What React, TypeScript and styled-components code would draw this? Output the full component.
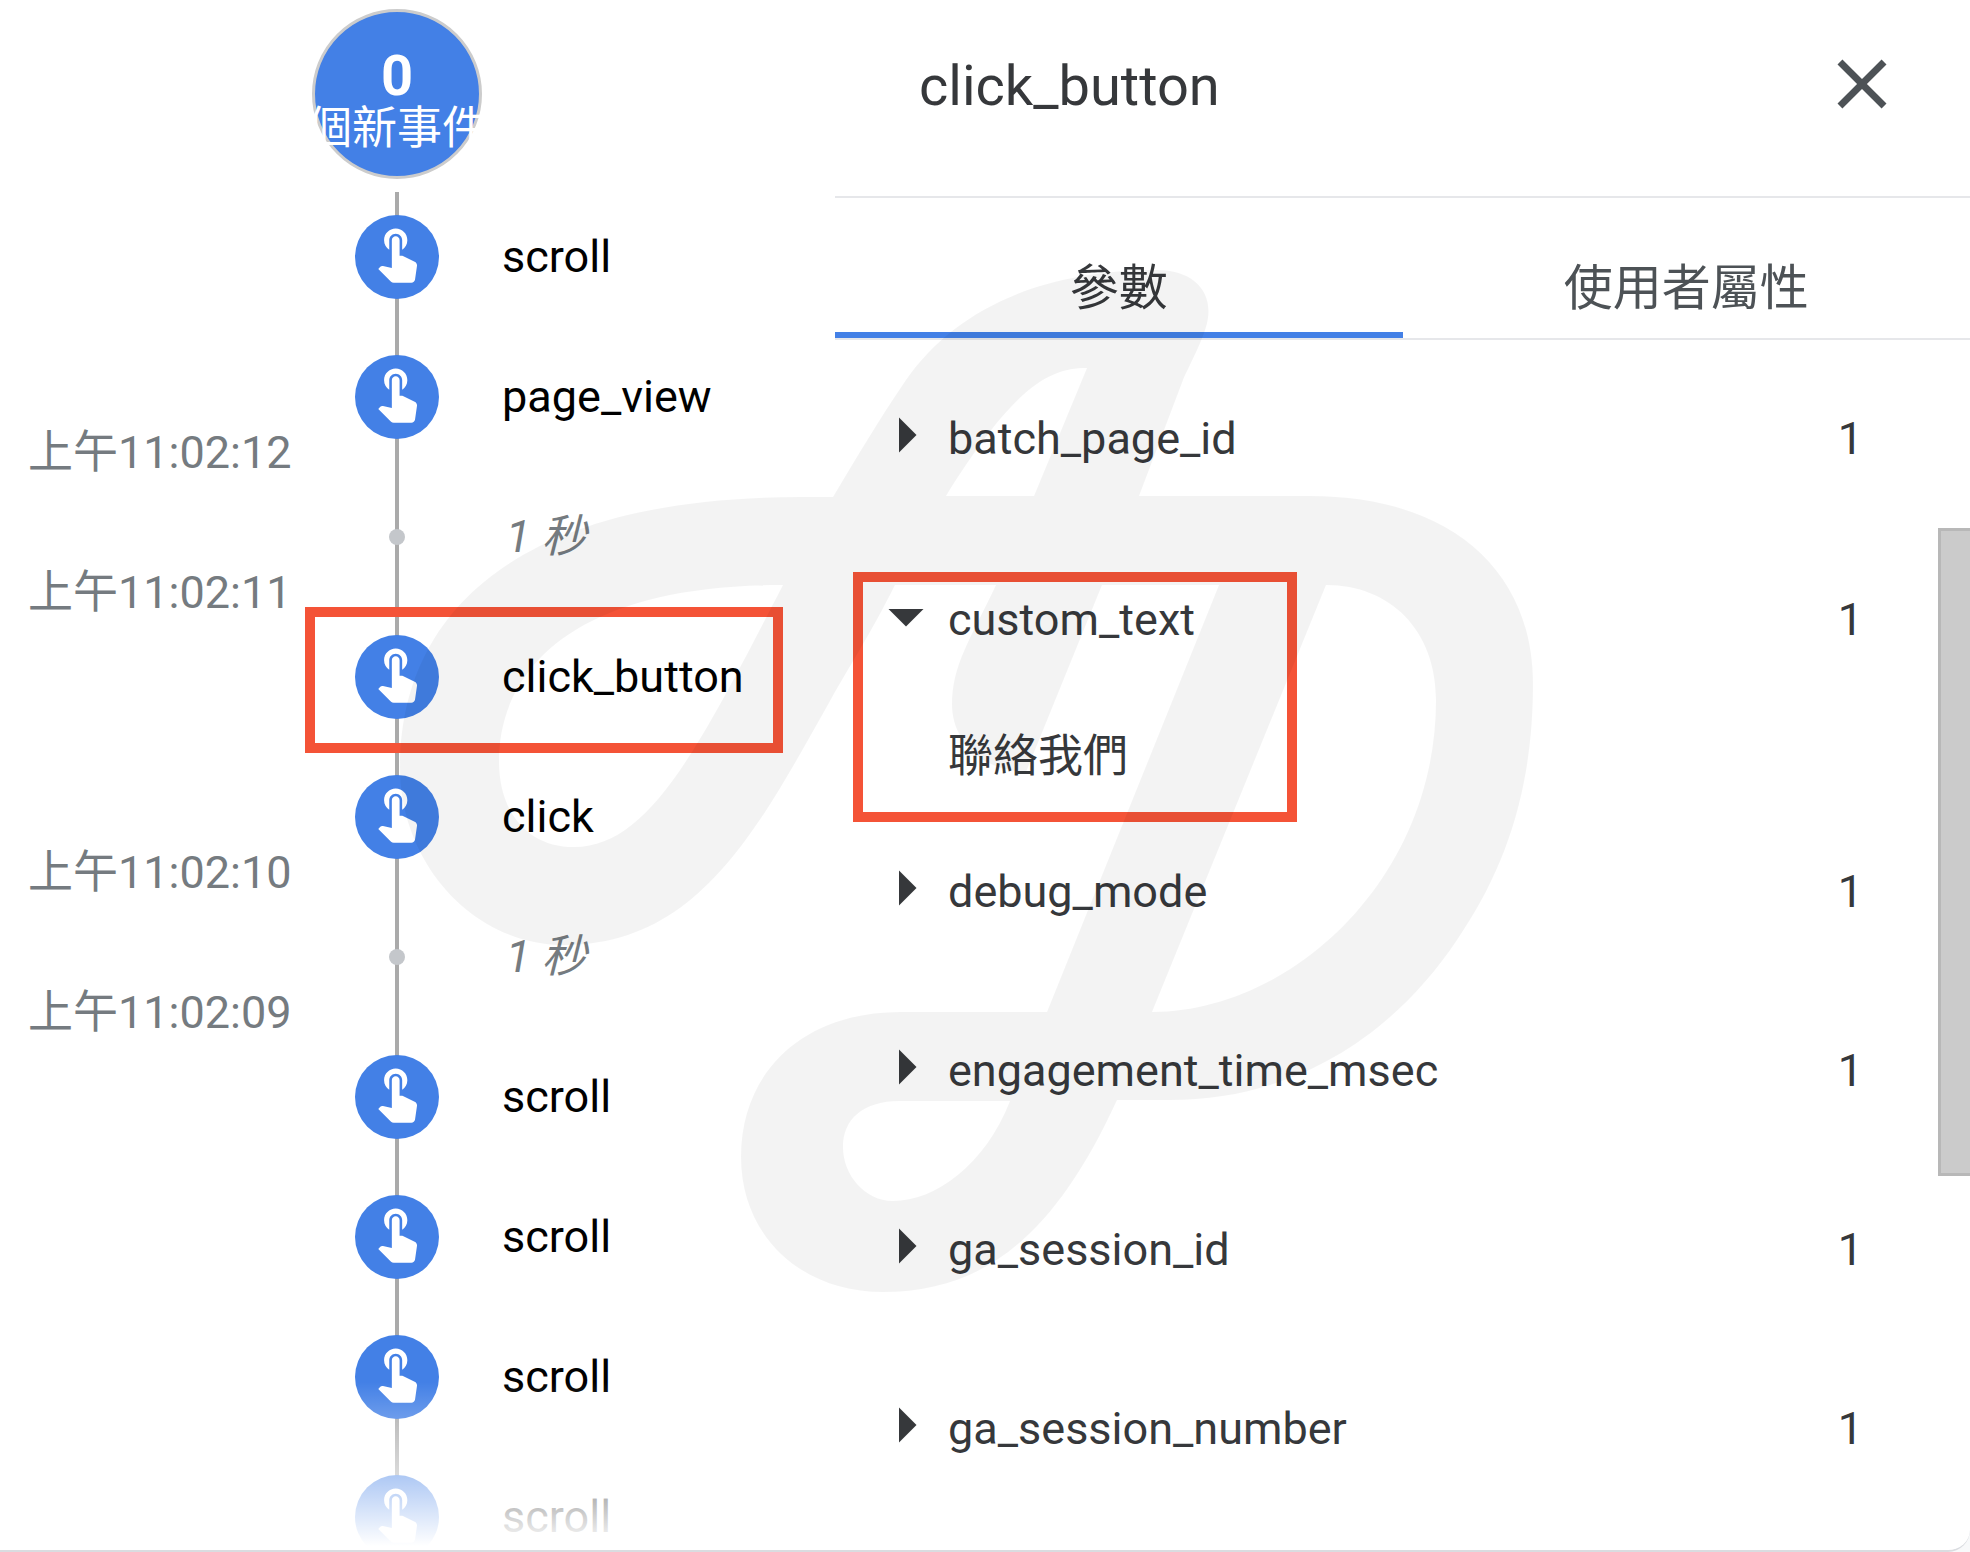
import React, { useState } from "react";
import styled, { createGlobalStyle, css } from "styled-components";

const GlobalStyle = createGlobalStyle`
  *, *::before, *::after { box-sizing: border-box; }
  body {
    margin: 0;
    background: #f8f9fa;
    color: #000;
    font-family: Roboto, "Noto Sans CJK TC", sans-serif;
    font-size: 45px;
    line-height: 56px;
  }
  button {
    margin: 0;
    padding: 0;
    border: 0;
    background: none;
    color: inherit;
    font: inherit;
    cursor: pointer;
  }
  ul, ol { margin: 0; padding: 0; list-style: none; }
`;

const Frame = styled.main`
  position: relative;
  display: grid;
  grid-template-columns: 835fr 1135fr;
  height: 100vh;
  overflow: hidden;
  background: #fff;
  border-bottom: 2px solid #dadce0;
  border-bottom-right-radius: 22px;
`;

const Timeline = styled.section`
  position: relative;
  overflow: hidden;
`;

const Fade = styled.div`
  position: absolute;
  inset: auto 0 0 0;
  height: 168px;
  background: linear-gradient(rgba(255, 255, 255, 0), #fff 164px);
  pointer-events: none;
`;

const Counter = styled.div`
  display: flex;
  flex-direction: column;
  align-items: center;
  width: 170px;
  height: 170px;
  margin: 9px 0 8px 312px;
  padding-top: 36px;
  border: 3px solid #ccc;
  border-radius: 50%;
  background: #4380e6;
  color: #fff;
  white-space: nowrap;
`;

const CounterValue = styled.strong`
  font-size: 56px;
  font-weight: 700;
  line-height: 56px;
`;

const CounterLabel = styled.span`
  line-height: 50px;
`;

const EventList = styled.ol`
  background: linear-gradient(#aaa, #aaa) 395px 5px / 4px 100% no-repeat;
`;

const EventRow = styled.li`
  position: relative;
  display: grid;
  grid-template-columns: 312px 170px 1fr;
  align-items: center;
  height: 140px;
`;

const Time = styled.time`
  align-self: end;
  padding-left: 28px;
  color: #757b80;
  line-height: 28px;
  white-space: nowrap;
`;

const Marker = styled.button`
  grid-column: 2;
  justify-self: center;
  display: grid;
  place-items: center;
  width: 84px;
  height: 84px;
  border-radius: 50%;
  background: #4380e6;
  color: #fff;
`;

const Dot = styled.span`
  grid-column: 2;
  justify-self: center;
  width: 16px;
  height: 16px;
  border-radius: 50%;
  background: #c4c7cb;
`;

const EventName = styled.span`
  padding-left: 20px;
  white-space: nowrap;
`;

const Gap = styled.em`
  padding-left: 24px;
  color: #757b80;
  white-space: nowrap;
`;

const outline = css`
  position: absolute;
  border: 10px solid #f45337;
  pointer-events: none;
`;

const EventOutline = styled.div`
  ${outline}
  left: 305px;
  top: 0;
  width: 478px;
  height: 146px;
`;

const ParamOutline = styled.div`
  ${outline}
  left: 18px;
  top: 42px;
  width: 444px;
  height: 250px;
`;

const Panel = styled.section`
  position: relative;
  color: #36383b;
`;

const PanelHeader = styled.header`
  display: flex;
  align-items: center;
  justify-content: space-between;
  padding: 42px 66px 70px 84px;
  border-bottom: 2px solid #e6e7ea;
`;

const Title = styled.h1`
  margin: 0;
  padding-top: 4px;
  font-size: 56px;
  font-weight: 400;
  line-height: 72px;
`;

const CloseButton = styled.button`
  display: grid;
  width: 84px;
  height: 84px;
  color: #4d5256;
`;

const Tabs = styled.div`
  display: grid;
  grid-template-columns: 1fr 1fr;
  border-bottom: 2px solid #e6e7ea;
`;

const Tab = styled.button<{ $active: boolean }>`
  height: 140px;
  padding-top: 48px;
  border-bottom: 6px solid ${(p) => (p.$active ? "#4380e6" : "transparent")};
  color: ${(p) => (p.$active ? "#36383b" : "#4d5256")};
  font-size: 49px;
`;

const ParamList = styled.ul`
  padding-top: 9px;
`;

const ParamItem = styled.li<{ $open: boolean }>`
  position: relative;
  margin-top: ${(p) => (p.$open ? 2 : 0)}px;
`;

const ParamRow = styled.div`
  display: grid;
  grid-template-columns: 84px 1fr auto;
  align-items: center;
  height: 179px;
  padding: 0 107px 0 29px;
`;

const Toggle = styled.button`
  display: grid;
  padding-bottom: 8px;
`;

const ParamValue = styled.div`
  padding: 20px 0 17px 113px;
`;

const ScrollThumb = styled.div`
  position: absolute;
  top: 528px;
  right: 0;
  width: 32px;
  height: 648px;
  border: 3px solid #b8b8b8;
  border-right: 0;
  background: #cbcbcb;
`;

const Watermark = styled.svg`
  position: absolute;
  left: 330px;
  top: 230px;
  width: 1230px;
  height: 1100px;
  pointer-events: none;
`;

const TapIcon = () => (
  <svg width="62" height="62" viewBox="0 2 24 24" fill="currentColor" aria-hidden="true">
    <path d="M9 11.24V7.5C9 6.12 10.12 5 11.5 5S14 6.12 14 7.5v3.74c1.21-.81 2-2.18 2-3.74C16 5.01 13.99 3 11.5 3S7 5.01 7 7.5c0 1.56.79 2.93 2 3.74zm9.84 4.63l-4.54-2.26c-.17-.07-.35-.11-.54-.11H13v-6c0-.83-.67-1.5-1.5-1.5S10 6.67 10 7.5v10.74l-3.43-.72c-.08-.01-.15-.03-.24-.03-.31 0-.59.13-.79.33l-.79.8 4.94 4.94c.27.27.65.44 1.06.44h6.79c.75 0 1.33-.55 1.44-1.28l.75-5.27c.01-.07.02-.14.02-.2 0-.62-.38-1.16-.91-1.38z" />
  </svg>
);

const ArrowIcon = ({ open }: { open: boolean }) => (
  <svg width="84" height="84" viewBox="0 0 24 24" fill="currentColor" aria-hidden="true">
    <path d={open ? "M7 10l5 5 5-5z" : "M10 17l5-5-5-5v10z"} />
  </svg>
);

type Entry = { name?: string; gap?: string; time?: string; outlined?: boolean };

const entries: Entry[] = [
  { name: "scroll" },
  { name: "page_view", time: "上午11:02:12" },
  { gap: "1 秒", time: "上午11:02:11" },
  { name: "click_button", outlined: true },
  { name: "click", time: "上午11:02:10" },
  { gap: "1 秒", time: "上午11:02:09" },
  { name: "scroll" },
  { name: "scroll" },
  { name: "scroll" },
  { name: "scroll" },
];

const params = [
  { name: "batch_page_id", count: 1 },
  { name: "custom_text", count: 1, value: "聯絡我們" },
  { name: "debug_mode", count: 1 },
  { name: "engagement_time_msec", count: 1 },
  { name: "ga_session_id", count: 1 },
  { name: "ga_session_number", count: 1 },
];

const tabs = ["參數", "使用者屬性"];

export default function App() {
  const [tab, setTab] = useState(0);

  return (
    <>
      <GlobalStyle />
      <Frame>
        <Timeline>
          <Counter>
            <CounterValue>0</CounterValue>
            <CounterLabel>個新事件</CounterLabel>
          </Counter>
          <EventList>
            {entries.map((entry, i) => (
              <EventRow key={i}>
                {entry.time && <Time>{entry.time}</Time>}
                {entry.name ? (
                  <>
                    <Marker aria-label={entry.name}>
                      <TapIcon />
                    </Marker>
                    <EventName>{entry.name}</EventName>
                  </>
                ) : (
                  <>
                    <Dot />
                    <Gap>{entry.gap}</Gap>
                  </>
                )}
                {entry.outlined && <EventOutline />}
              </EventRow>
            ))}
          </EventList>
          <Fade />
        </Timeline>

        <Panel>
          <PanelHeader>
            <Title>click_button</Title>
            <CloseButton aria-label="關閉">
              <svg width="84" height="84" viewBox="0 0 24 24" fill="currentColor" aria-hidden="true">
                <path d="M19 6.41L17.59 5 12 10.59 6.41 5 5 6.41 10.59 12 5 17.59 6.41 19 12 13.41 17.59 19 19 17.59 13.41 12z" />
              </svg>
            </CloseButton>
          </PanelHeader>
          <Tabs role="tablist">
            {tabs.map((label, i) => (
              <Tab key={label} role="tab" aria-selected={tab === i} $active={tab === i} onClick={() => setTab(i)}>
                {label}
              </Tab>
            ))}
          </Tabs>
          <ParamList>
            {params.map((param) => (
              <ParamItem key={param.name} $open={!!param.value}>
                <ParamRow>
                  <Toggle aria-label={param.name} aria-expanded={!!param.value}>
                    <ArrowIcon open={!!param.value} />
                  </Toggle>
                  <span>{param.name}</span>
                  <span>{param.count}</span>
                </ParamRow>
                {param.value && (
                  <>
                    <ParamValue>{param.value}</ParamValue>
                    <ParamOutline />
                  </>
                )}
              </ParamItem>
            ))}
          </ParamList>
          <ScrollThumb />
        </Panel>

        <Watermark viewBox="330 230 1230 1100" aria-hidden="true">
          <path
            fill="#000"
            fillOpacity="0.047"
            fillRule="evenodd"
            d="M833 497C855 460 880 418 906 380C955 310 1040 270 1157 270C1192 270 1212 290 1208 318C1206 335 1188 368 1183 380L1139 496H1310C1450 496 1533 570 1533 684C1533 790 1505 870 1457 940C1390 1040 1290 1100 1170 1100H1117C1055 1235 985 1292 883 1292C800 1292 741 1235 741 1157C741 1070 805 1012 900 1012H1047L1219 585H1102L1026 772C975 770 952 735 952 705C952 665 970 640 996 585H895C870 635 850 665 830 701C760 825 700 945 565 945C470 945 400 860 400 768C400 610 520 497 800 497Z
              M1087 368C1050 368 1015 385 946 496H1034Z
              M783 585C560 585 499 680 499 761C499 815 530 847 574 847C650 847 700 745 783 585Z
              M1326 585L1152 1012C1290 1012 1436 880 1436 700C1436 630 1390 585 1326 585Z
              M1010 1101C985 1165 935 1201 893 1201C865 1201 843 1175 843 1147C843 1120 862 1101 900 1101Z"
          />
        </Watermark>
      </Frame>
    </>
  );
}
